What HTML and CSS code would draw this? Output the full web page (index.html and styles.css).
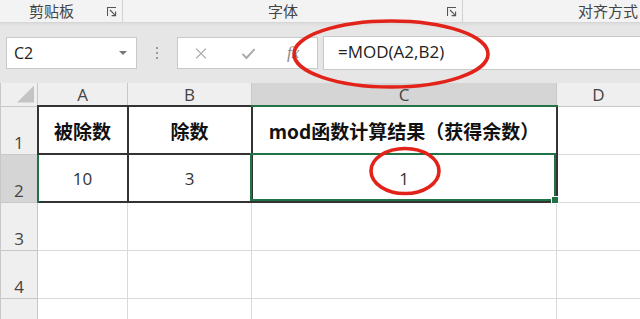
FILE: index.html
```html
<!DOCTYPE html>
<html lang="zh-CN">
<head>
    <meta charset="UTF-8">
    <meta name="viewport" content="width=device-width, initial-scale=1.0">
    <title>MOD函数</title>
    <link rel="stylesheet" href="styles.css">
</head>
<body>
    <div class="page">
        <div class="ribbon">
            <div class="group g1">
                <span class="glabel">剪贴板</span>
                <svg class="launcher" viewBox="0 0 10 10"><path d="M0.5 9V0.5H9"/><path d="M3 3L8.6 8.6M8.6 4.6V8.6H4.6"/></svg>
            </div>
            <div class="group g2">
                <span class="glabel">字体</span>
                <svg class="launcher" viewBox="0 0 10 10"><path d="M0.5 9V0.5H9"/><path d="M3 3L8.6 8.6M8.6 4.6V8.6H4.6"/></svg>
            </div>
            <div class="group g3">
                <span class="glabel">对齐方式</span>
            </div>
        </div>

        <div class="formula-bar">
            <div class="name-box">
                <span>C2</span>
                <span class="caret"></span>
            </div>
            <div class="grip"><i></i><i></i><i></i></div>
            <div class="fx-box">
                <svg class="fx-icon" viewBox="0 0 16 16"><path d="M2 2L14 14M14 2L2 14"/></svg>
                <svg class="fx-icon ok" viewBox="0 0 18 16"><path d="M1.5 8.5L6.5 13.5L16.5 2.5"/></svg>
                <span class="fx">fx</span>
            </div>
            <div class="formula">=MOD(A2,B2)</div>
        </div>

        <div class="sheet">
            <table class="grid">
                <colgroup>
                    <col style="width:37px">
                    <col style="width:90px">
                    <col style="width:124px">
                    <col style="width:305px">
                    <col style="width:84px">
                </colgroup>
                <tr class="head">
                    <th class="corner"><span class="tri"></span></th>
                    <th>A</th>
                    <th>B</th>
                    <th class="sel-col">C</th>
                    <th>D</th>
                </tr>
                <tr>
                    <th class="rh">1</th>
                    <td class="box bold">被除数</td>
                    <td class="box bold">除数</td>
                    <td class="box bold">mod函数计算结果（获得余数）</td>
                    <td></td>
                </tr>
                <tr>
                    <th class="rh sel-row">2</th>
                    <td class="box">10</td>
                    <td class="box">3</td>
                    <td class="box">1</td>
                    <td></td>
                </tr>
                <tr>
                    <th class="rh">3</th>
                    <td></td><td></td><td></td><td></td>
                </tr>
                <tr>
                    <th class="rh">4</th>
                    <td></td><td></td><td></td><td></td>
                </tr>
                <tr>
                    <th class="rh"></th>
                    <td></td><td></td><td></td><td></td>
                </tr>
            </table>
            <div class="selection"><span class="handle"></span></div>
        </div>

        <svg class="marks" viewBox="0 0 640 319">
            <ellipse cx="391" cy="54" rx="97" ry="33"/>
            <ellipse cx="405" cy="171" rx="34" ry="22.5"/>
        </svg>
    </div>
</body>
</html>
```

FILE: styles.css
```css
body {
    margin: 0;
    background: #ffffff;
    font-family: "Open Sans", "Noto Sans CJK SC", sans-serif;
}
.page {
    position: relative;
    width: 640px;
    height: 319px;
    overflow: hidden;
}

/* ribbon group labels */
.ribbon {
    display: flex;
    height: 22px;
    background: #f3f3f3;
    border-bottom: 1px solid #d6d6d6;
    font-family: "Noto Sans CJK SC", sans-serif;
    font-size: 15px;
    color: #444;
}
.group {
    display: flex;
    align-items: center;
}
.g1 {
    width: 122px;
    border-right: 1px solid #d2d2d2;
}
.g2 {
    width: 339px;
    border-right: 1px solid #d2d2d2;
}
.g3 {
    flex: 1;
    padding-left: 115px;
    white-space: nowrap;
}
.glabel {
    flex: 1;
    text-align: center;
    line-height: 22px;
}
.g3 .glabel {
    text-align: left;
}
.launcher {
    width: 10px;
    height: 10px;
    margin: 1px 5px 0 4px;
    fill: none;
    stroke: #555;
    stroke-width: 1.1;
}

/* formula bar */
.formula-bar {
    display: flex;
    align-items: center;
    height: 60px;
    padding: 0 0 0 6px;
    background: linear-gradient(#dcdcdc, #e6e6e6 4px);
    box-sizing: border-box;
}
.name-box {
    display: flex;
    align-items: center;
    justify-content: space-between;
    width: 131px;
    height: 32px;
    padding: 0 9px 0 7px;
    box-sizing: border-box;
    background: #fff;
    border: 1px solid #c9c9c9;
    font-size: 16px;
    color: #222;
}
.caret {
    width: 0;
    height: 0;
    border-left: 4px solid transparent;
    border-right: 4px solid transparent;
    border-top: 4px solid #777;
}
.grip {
    display: flex;
    flex-direction: column;
    gap: 3px;
    width: 40px;
    align-items: center;
}
.grip i {
    width: 2px;
    height: 2px;
    background: #9a9a9a;
}
.fx-box {
    display: flex;
    align-items: center;
    width: 141px;
    height: 32px;
    box-sizing: border-box;
    background: #fff;
    border: 1px solid #c9c9c9;
    padding-left: 16px;
}
.fx-icon {
    width: 14px;
    height: 13px;
    fill: none;
    stroke: #a9a9a9;
    stroke-width: 1.6;
    margin-right: 32px;
}
.fx-icon.ok {
    width: 17px;
    height: 13px;
    stroke-width: 2.4;
    margin-right: 30px;
}
.fx {
    font-family: "Liberation Serif", serif;
    font-style: italic;
    font-size: 17px;
    color: #8a8a8a;
}
.formula {
    flex: 1;
    height: 32px;
    margin-left: 5px;
    padding-left: 14px;
    background: #fff;
    border: 1px solid #c9c9c9;
    border-right: none;
    font-size: 17px;
    line-height: 30px;
    color: #222;
}

/* sheet grid */
.sheet {
    position: relative;
}
.grid {
    border-collapse: collapse;
    table-layout: fixed;
    width: 640px;
}
.grid tr {
    height: 48px;
}
.grid tr.head {
    height: 22px;
}
.grid th {
    padding: 0;
    background: #efefef;
    border: 1px solid #c8c8c8;
    font-weight: normal;
    font-size: 17px;
    color: #444;
}
.head th {
    border-top: none;
    padding-top: 2px;
    line-height: 20px;
}
.corner {
    position: relative;
}
.tri {
    position: absolute;
    right: 3px;
    bottom: 3px;
    width: 17px;
    height: 17px;
    background: #c4c4c4;
    clip-path: polygon(100% 0, 100% 100%, 0 100%);
}
.rh {
    vertical-align: bottom;
    line-height: 22px;
    border-left: none;
}
.sel-col {
    background: #d5d5d5 !important;
    border-bottom: 2px solid #217346 !important;
}
.sel-row {
    background: #d5d5d5 !important;
    border-right: 2px solid #217346 !important;
}
.grid td {
    padding: 0;
    border: 1px solid #dadada;
    text-align: center;
    font-size: 17px;
    color: #333;
    white-space: nowrap;
}
.grid td.box {
    border: 2px solid #333;
}
.grid td.bold {
    font-family: "Noto Sans CJK SC", sans-serif;
    font-weight: bold;
    font-size: 19px;
    color: #111;
}

/* active cell C2 */
.selection {
    position: absolute;
    left: 250px;
    top: 70px;
    width: 306px;
    height: 48px;
    border: 2px solid #217346;
    box-sizing: border-box;
}
.handle {
    position: absolute;
    right: -5px;
    bottom: -5px;
    width: 6px;
    height: 6px;
    background: #217346;
    border: 1px solid #fff;
}

/* red hand-drawn circles */
.marks {
    position: absolute;
    left: 0;
    top: 0;
    width: 640px;
    height: 319px;
    pointer-events: none;
}
.marks ellipse {
    fill: none;
    stroke: #e2231a;
    stroke-width: 3.6;
}
```
